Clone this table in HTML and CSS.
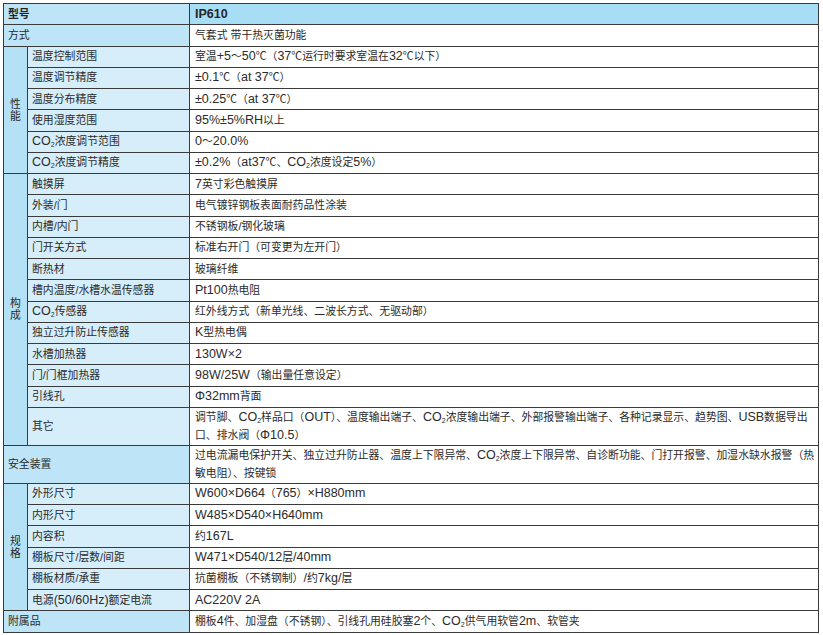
FILE: index.html
```html
<!DOCTYPE html>
<html lang="zh-CN">
<head>
<meta charset="utf-8">
<title>IP610 规格</title>
<link rel="stylesheet" href="styles.css">
</head>
<body>
<table class="spec">
  <colgroup><col class="c-group"><col class="c-label"><col class="c-value"></colgroup>
  <tbody>
    <tr class="row head"><td class="label top" colspan="2">型号</td><td class="value"><span class="en">IP610</span></td></tr>
    <tr class="row"><td class="label top" colspan="2">方式</td><td class="value">气套式 带干热灭菌功能</td></tr>

    <tr class="row"><td class="group" rowspan="6">性<br>能</td><td class="label">温度控制范围</td><td class="value">室温<span class="en">+5</span>～<span class="en">50</span>℃（<span class="en">37</span>℃运行时要求室温在<span class="en">32</span>℃以下）</td></tr>
    <tr class="row"><td class="label">温度调节精度</td><td class="value"><span class="en">±0.1</span>℃（<span class="en">at 37</span>℃）</td></tr>
    <tr class="row"><td class="label">温度分布精度</td><td class="value"><span class="en">±0.25</span>℃（<span class="en">at 37</span>℃）</td></tr>
    <tr class="row"><td class="label">使用湿度范围</td><td class="value"><span class="en">95%±5%RH</span>以上</td></tr>
    <tr class="row"><td class="label"><span class="en">CO</span><sub>2</sub>浓度调节范围</td><td class="value"><span class="en">0</span>～<span class="en">20.0%</span></td></tr>
    <tr class="row"><td class="label"><span class="en">CO</span><sub>2</sub>浓度调节精度</td><td class="value"><span class="en">±0.2%</span>（<span class="en">at37</span>℃、<span class="en">CO</span><sub>2</sub>浓度设定<span class="en">5%</span>）</td></tr>

    <tr class="row"><td class="group" rowspan="12">构<br>成</td><td class="label">触摸屏</td><td class="value"><span class="en">7</span>英寸彩色触摸屏</td></tr>
    <tr class="row"><td class="label">外装/门</td><td class="value">电气镀锌钢板表面耐药品性涂装</td></tr>
    <tr class="row"><td class="label">内槽/内门</td><td class="value">不锈钢板/钢化玻璃</td></tr>
    <tr class="row"><td class="label">门开关方式</td><td class="value">标准右开门（可变更为左开门）</td></tr>
    <tr class="row"><td class="label">断热材</td><td class="value">玻璃纤维</td></tr>
    <tr class="row"><td class="label">槽内温度/水槽水温传感器</td><td class="value"><span class="en">Pt100</span>热电阻</td></tr>
    <tr class="row"><td class="label"><span class="en">CO</span><sub>2</sub>传感器</td><td class="value">红外线方式（新单光线、二波长方式、无驱动部）</td></tr>
    <tr class="row"><td class="label">独立过升防止传感器</td><td class="value"><span class="en">K</span>型热电偶</td></tr>
    <tr class="row"><td class="label">水槽加热器</td><td class="value"><span class="en">130W×2</span></td></tr>
    <tr class="row"><td class="label">门/门框加热器</td><td class="value"><span class="en">98W/25W</span>（输出量任意设定）</td></tr>
    <tr class="row"><td class="label">引线孔</td><td class="value"><span class="en">Φ32mm</span>背面</td></tr>
    <tr class="row double"><td class="label">其它</td><td class="value">调节脚、<span class="en">CO</span><sub>2</sub>样品口（<span class="en">OUT</span>）、温度输出端子、<span class="en">CO</span><sub>2</sub>浓度输出端子、外部报警输出端子、各种记录显示、趋势图、<span class="en">USB</span>数据导出<br>口、排水阀（<span class="en">Φ10.5</span>）</td></tr>

    <tr class="row double"><td class="label top" colspan="2">安全装置</td><td class="value">过电流漏电保护开关、独立过升防止器、温度上下限异常、<span class="en">CO</span><sub>2</sub>浓度上下限异常、自诊断功能、门打开报警、加湿水缺水报警（热<br>敏电阻）、按键锁</td></tr>

    <tr class="row"><td class="group" rowspan="6">规<br>格</td><td class="label">外形尺寸</td><td class="value"><span class="en">W600×D664</span>（<span class="en">765</span>）<span class="en">×H880mm</span></td></tr>
    <tr class="row"><td class="label">内形尺寸</td><td class="value"><span class="en">W485×D540×H640mm</span></td></tr>
    <tr class="row"><td class="label">内容积</td><td class="value">约<span class="en">167L</span></td></tr>
    <tr class="row"><td class="label">棚板尺寸/层数/间距</td><td class="value"><span class="en">W471×D540/12</span>层<span class="en">/40mm</span></td></tr>
    <tr class="row"><td class="label">棚板材质/承重</td><td class="value">抗菌棚板（不锈钢制）<span class="en">/</span>约<span class="en">7kg/</span>层</td></tr>
    <tr class="row"><td class="label">电源<span class="en">(50/60Hz)</span>额定电流</td><td class="value"><span class="en">AC220V 2A</span></td></tr>

    <tr class="row"><td class="label top" colspan="2">附属品</td><td class="value">棚板<span class="en">4</span>件、加湿盘（不锈钢）、引线孔用硅胶塞<span class="en">2</span>个、<span class="en">CO</span><sub>2</sub>供气用软管<span class="en">2m</span>、软管夹</td></tr>
  </tbody>
</table>
</body>
</html>
```
FILE: styles.css
```css
html, body {
  background: #ffffff;
}
body {
  margin: 3px;
  font-family: "Liberation Sans", "Noto Sans CJK SC", sans-serif;
  font-size: 10.85px;
  color: #2b2b2b;
}
.spec {
  border-collapse: collapse;
  table-layout: fixed;
  width: 815px;
  border: 1px solid #3a3a3a;
}
.c-group { width: 24px; }
.c-label { width: 162px; }
.c-value { width: 629px; }
.spec td {
  border: 1px solid #3a3a3a;
  padding: 0 4px 0 4px;
  vertical-align: middle;
  line-height: 17px;
  white-space: nowrap;
  overflow: hidden;
}
.row { height: 21.25px; }
.row.double { height: 38px; }
.row.double td { line-height: 18px; }
.group {
  background: #b4e1f6;
  text-align: center;
  padding: 0;
  line-height: 12px !important;
}
.label {
  background: #d6eefa;
}
.label.top {
  background: #bde5f7;
}
.value {
  background: #ffffff;
  padding-left: 5px !important;
}
.head td {
  background: #a8ddf6;
  font-weight: bold;
  color: #262626;
}
.en {
  font-size: 12.5px;
}
sub {
  font-size: 7px;
  vertical-align: -2px;
  line-height: 0;
}
```
